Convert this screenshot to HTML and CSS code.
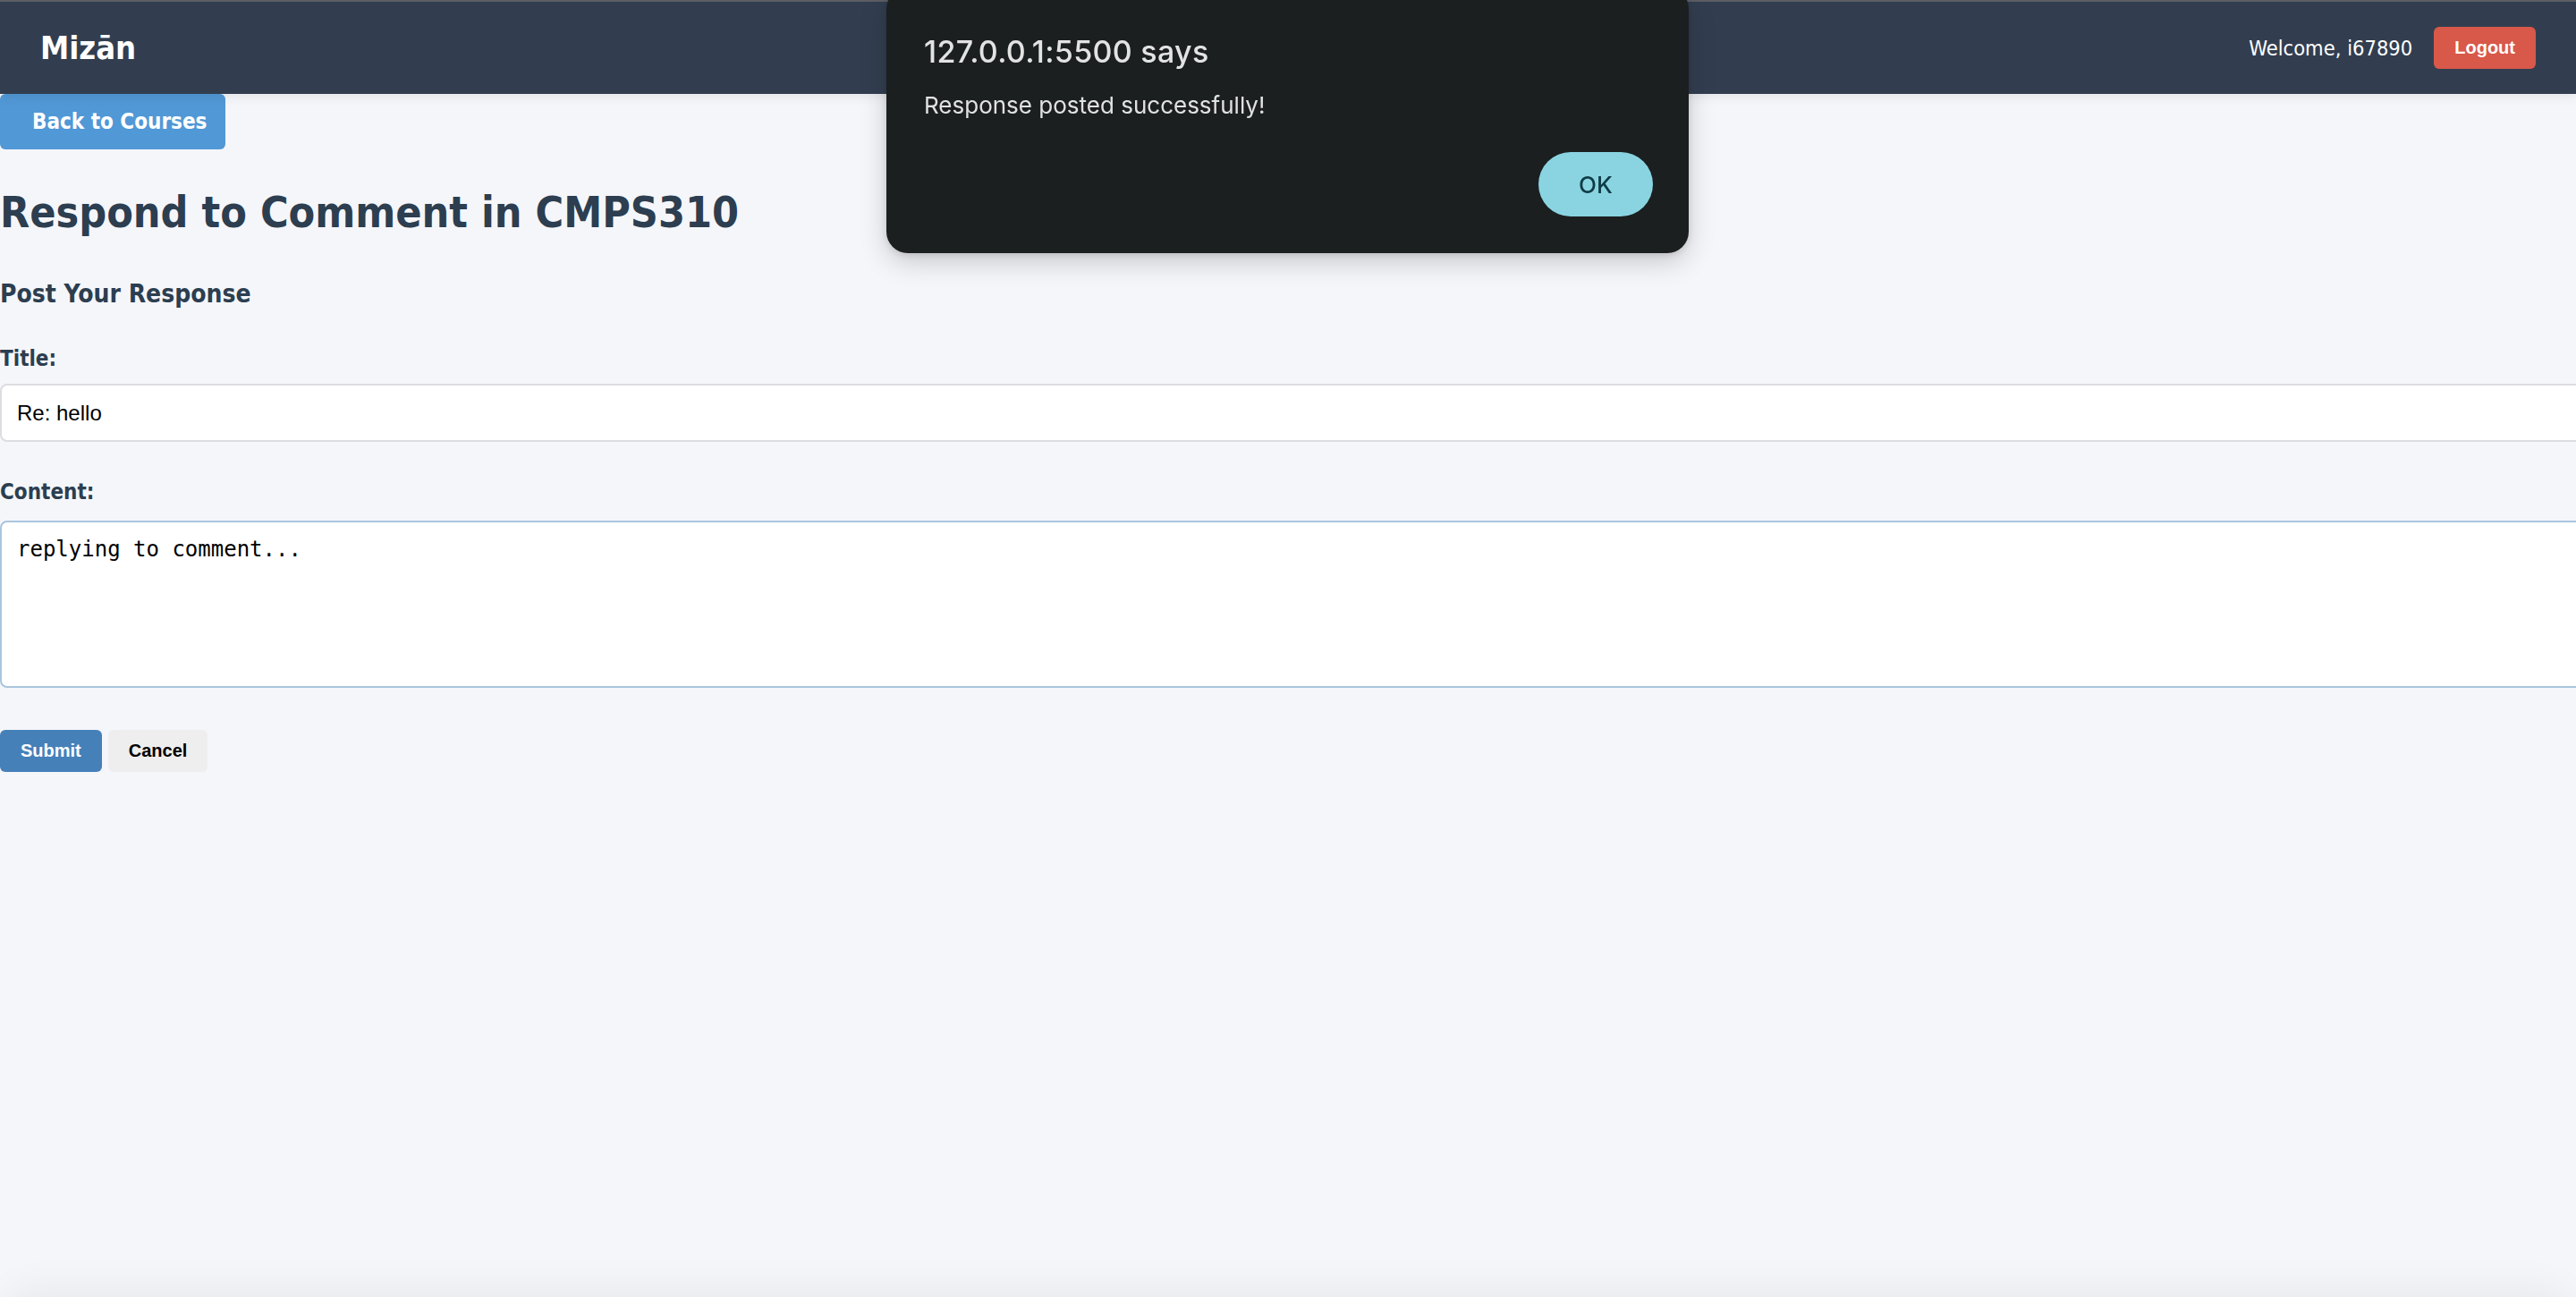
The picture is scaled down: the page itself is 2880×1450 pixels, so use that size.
FILE: index.html
```html
<!DOCTYPE html>
<html lang="en">
<head>
<meta charset="utf-8">
<title>Respond to Comment</title>
<link rel="stylesheet" href="styles.css">
</head>
<body>
<div class="shell">
  <header class="topbar">
    <div class="logo">Mizān</div>
    <div class="user">
      <span class="welcome">Welcome, i67890</span>
      <button class="btn btn-logout" type="button">Logout</button>
    </div>
  </header>
  <main class="page">
    <a class="btn-back" href="#">Back to Courses</a>
    <h1 class="page-title">Respond to Comment in CMPS310</h1>
    <h3 class="section-title">Post Your Response</h3>
    <form class="form">
      <label class="field-label" for="title">Title:</label>
      <input class="field-input" id="title" type="text" value="Re: hello">
      <label class="field-label field-label-content" for="content">Content:</label>
      <textarea class="field-textarea" id="content">replying to comment...</textarea>
      <div class="actions">
        <button class="btn btn-submit" type="button">Submit</button>
        <button class="btn btn-cancel" type="button">Cancel</button>
      </div>
    </form>
  </main>
</div>
<footer class="page-foot"></footer>

<div class="alert-dialog" role="alertdialog">
  <div class="alert-title">127.0.0.1:5500 says</div>
  <div class="alert-message">Response posted successfully!</div>
  <div class="alert-actions">
    <button class="alert-ok" type="button">OK</button>
  </div>
</div>
</body>
</html>
```

FILE: styles.css
```css
html, body {
  margin: 0;
  padding: 0;
  overflow: hidden;
}

body {
  background: #f5f6fa;
  font-family: "DejaVu Sans Condensed", "DejaVu Sans", sans-serif;
  color: #2c3e50;
}

.shell {
  min-height: 100vh;
  display: flex;
  flex-direction: column;
}

.topbar {
  height: 103px;
  border-top: 2px solid #5c5e62;
  background: #323e50;
  display: flex;
  align-items: center;
  justify-content: space-between;
  padding: 0 45px 0 45px;
  box-shadow: 0 3px 12px rgba(0, 0, 0, 0.08);
  position: relative;
  z-index: 1;
}

.logo {
  color: #ffffff;
  font-size: 36px;
  font-weight: bold;
}

.user {
  display: flex;
  align-items: center;
}

.welcome {
  color: #ffffff;
  font-size: 23.5px;
  margin-right: 24px;
}

.btn {
  font-family: "Liberation Sans", Arial, sans-serif;
  font-weight: bold;
  font-size: 20px;
  height: 47px;
  padding: 0 23px;
  border: none;
  border-radius: 6px;
  cursor: pointer;
}

.btn-logout {
  background: #d85849;
  color: #ffffff;
}

.page {
  flex: 1;
  display: flex;
  flex-direction: column;
  align-items: flex-start;
}

.btn-back {
  display: block;
  height: 62px;
  line-height: 62px;
  padding: 0 21px 0 36px;
  background: #5198d6;
  color: #ffffff;
  font-size: 24px;
  font-weight: bold;
  text-decoration: none;
  border-radius: 6px;
}

.page-title {
  margin: 42px 0 0;
  font-size: 48px;
  line-height: 56px;
  font-weight: bold;
  color: #2c3e50;
}

.section-title {
  margin: 47px 0 0;
  font-size: 28px;
  line-height: 33px;
  font-weight: bold;
  color: #2c3e50;
}

.form {
  width: 100%;
  display: flex;
  flex-direction: column;
  align-items: flex-start;
}

.field-label {
  display: block;
  margin-top: 42px;
  font-size: 24px;
  line-height: 28px;
  font-weight: bold;
  color: #2c3e50;
}

.field-input {
  display: block;
  margin-top: 14px;
  width: calc(100% + 40px);
  height: 65px;
  box-sizing: border-box;
  padding: 0 17px;
  border: 2px solid #dcdde0;
  border-radius: 8px;
  background: #ffffff;
  font-family: "Liberation Sans", Arial, sans-serif;
  font-size: 24px;
  color: #000000;
  outline: none;
}

.field-textarea {
  display: block;
  margin-top: 18px;
  width: calc(100% + 40px);
  height: 187px;
  box-sizing: border-box;
  padding: 16px 17px;
  border: 2px solid #a9c6de;
  border-radius: 8px;
  background: #ffffff;
  font-family: "DejaVu Sans Mono", "Liberation Mono", monospace;
  font-size: 24px;
  line-height: 28px;
  color: #000000;
  resize: none;
  outline: none;
}

.actions {
  margin-top: 47px;
  display: flex;
  gap: 7px;
}

.btn-submit {
  background: #4580b9;
  color: #ffffff;
}

.btn-cancel {
  background: #eeeeee;
  color: #000000;
}

.page-foot {
  height: 60px;
  margin: 0 12px;
  border-radius: 28px;
  background: #f5f6fa;
  box-shadow: 0 0 40px 12px rgba(0, 0, 0, 0.05);
}

/* Browser alert dialog overlay */
.alert-dialog {
  position: fixed;
  left: 991px;
  top: -14px;
  width: 897px;
  height: 297px;
  box-sizing: border-box;
  padding: 52px 40px 41px 42px;
  background: #1b1f20;
  border-radius: 24px;
  box-shadow: 0 10px 30px rgba(0, 0, 0, 0.18), 0 2px 8px rgba(0, 0, 0, 0.12);
  display: flex;
  flex-direction: column;
  font-family: Inter, "Noto Sans", sans-serif;
  z-index: 10;
}

.alert-title {
  font-size: 34px;
  line-height: 40px;
  font-weight: 500;
  letter-spacing: 0.3px;
  color: #e3e3e3;
}

.alert-message {
  margin-top: 24px;
  font-size: 26px;
  line-height: 32px;
  color: #e1e1e1;
}

.alert-actions {
  margin-top: auto;
  display: flex;
  justify-content: flex-end;
}

.alert-ok {
  width: 128px;
  height: 72px;
  border: none;
  border-radius: 36px;
  background: #8ad4e2;
  color: #0e3b45;
  font-family: Inter, "Noto Sans", sans-serif;
  font-size: 26px;
  font-weight: 500;
  cursor: pointer;
}
```
